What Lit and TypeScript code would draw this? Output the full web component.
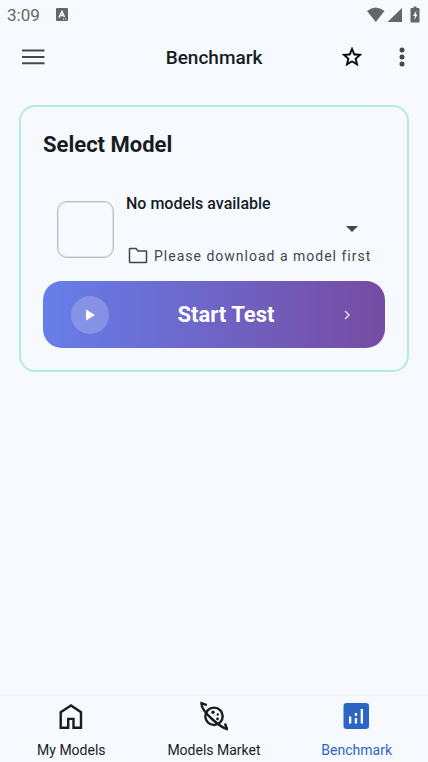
import { LitElement, html, css, svg } from "lit";
import { customElement, state } from "lit/decorators.js";
import { classMap } from "lit/directives/class-map.js";

const homeIcon = svg`<path d="M3.700 11.200 L14 4.500 L24 11.200 V26.800 H16.500 V17.900 H11.200 V26.800 H3.700 Z" />`;

const planetIcon = svg`
  <circle cx="14" cy="15.300" r="8.700" />
  <path d="M6.800 4.200 L1.500 2.200 C1.200 6 6 12.500 12 18 C17.500 23 22.500 27 27 28 L25 22.500" />
  <g class="dots"><circle cx="13" cy="11.300" r="1.700" /><circle cx="17.800" cy="13.500" r="1.200" /><circle cx="17.500" cy="18" r="1.400" /></g>`;

const chartIcon = svg`
  <rect class="tile" x="0.500" y="2" width="25.500" height="26" rx="3" />
  <path class="bars" d="M6 15.500h2.300v7H6z M11.800 12h2.300v3h-2.300z M11.800 17h2.300v5.500h-2.300z M17.700 8h2.300v14.500h-2.300z" />`;

const tabs = [
  { id: "models", label: "My Models", icon: homeIcon },
  { id: "market", label: "Models Market", icon: planetIcon },
  { id: "benchmark", label: "Benchmark", icon: chartIcon },
];

@customElement("app-root")
export class AppRoot extends LitElement {
  @state() private active = "benchmark";

  static styles = css`
    :host {
      display: flex;
      flex-direction: column;
      min-height: 100vh;
      background: #f6faff;
      color: #171c1f;
      font-family: Roboto, "Noto Sans", sans-serif;
    }
    button {
      font: inherit;
      color: inherit;
      border: 0;
      padding: 0;
      background: none;
      cursor: pointer;
    }
    svg {
      display: block;
      flex: none;
    }
    .status {
      display: flex;
      align-items: center;
      height: 29px;
      padding: 0 7px;
      color: #666;
      font-size: 17px;
    }
    .status .note {
      margin-left: 16px;
    }
    .status .radios {
      margin-left: auto;
    }
    .bar {
      display: grid;
      grid-template-columns: 1fr auto 1fr;
      align-items: center;
      height: 56px;
      padding: 0 8px;
    }
    .bar h1 {
      margin: 0;
      font-size: 19px;
      line-height: 25px;
      font-weight: 500;
    }
    .actions {
      display: flex;
      justify-content: flex-end;
    }
    .icon-button {
      display: grid;
      place-items: center;
      width: 50px;
      height: 48px;
    }
    .actions .more {
      width: 36px;
      margin-left: 7px;
    }
    main {
      flex: 1;
      padding: 20px 19px;
    }
    .card {
      padding: 22px;
      border: 2px solid #b4ecdc;
      border-radius: 16px;
    }
    .card h2 {
      margin: 0;
      font-size: 22px;
      line-height: 32px;
      font-weight: 700;
    }
    .picker {
      display: grid;
      grid-template-columns: 57px 1fr 24px;
      column-gap: 12px;
      align-items: center;
      height: 78px;
      margin-top: 29px;
      margin-bottom: 13px;
      padding: 0 21px 0 14px;
    }
    .thumb {
      height: 55px;
      border: 1px solid #b9bdc4;
      box-shadow: inset 0 0 0 1px #e0e3e8;
      border-radius: 10px;
    }
    .details {
      display: flex;
      flex-direction: column;
      justify-content: space-between;
      align-self: stretch;
      white-space: nowrap;
      width: 0;
    }
    .details select {
      appearance: none;
      border: 0;
      padding: 0;
      margin: 0;
      background: none;
      color: inherit;
      font: 500 16px/28px Roboto, "Noto Sans", sans-serif;
      align-self: flex-start;
    }
    .hint {
      display: flex;
      align-items: center;
      gap: 6px;
      padding-left: 2px;
      color: #40484c;
      font-size: 14px;
      line-height: 24px;
      letter-spacing: 1px;
    }
    .start {
      display: flex;
      align-items: center;
      width: 100%;
      height: 67px;
      padding: 0 28px;
      border-radius: 19px;
      background: linear-gradient(90deg, #667eea, #764ba2);
      color: #fff;
    }
    .start .play {
      display: grid;
      place-items: center;
      width: 38px;
      height: 38px;
      border-radius: 50%;
      background: rgb(255 255 255 / 20%);
    }
    .start .caption {
      flex: 1;
      padding-left: 6px;
      font-size: 22px;
      line-height: 28px;
      font-weight: 700;
    }
    nav {
      display: grid;
      grid-template-columns: repeat(3, 1fr);
      height: 66px;
      border-top: 1px solid #f0f4f9;
    }
    .tab {
      display: flex;
      flex-direction: column;
      align-items: center;
      gap: 9px;
      padding-top: 5px;
      font-size: 14px;
      line-height: 20px;
    }
    .tab svg {
      fill: none;
      stroke: #171c1f;
      stroke-width: 2.4;
    }
    .tab .dots {
      fill: #171c1f;
      stroke: none;
    }
    .tab .tile {
      fill: #2b66c5;
      stroke: none;
    }
    .tab .bars {
      fill: #fff;
      stroke: none;
    }
    .tab.active {
      color: #2b66c5;
    }
  `;

  render() {
    return html`
      <div class="status">
        <span>3:09</span>
        <svg class="note" width="12" height="13" viewBox="0 0 12 13">
          <rect width="12" height="13" rx="1" fill="#666" />
          <path d="M3 9.500 L6 3.500 L8.500 9 M4.500 7.500 H7.500" fill="none" stroke="#fff" stroke-width="1.500" />
          <path d="M7 11h1M9 11h1" stroke="#fff" />
        </svg>
        <svg class="radios" width="54" height="18" viewBox="0 0 54 18" fill="#666">
          <path d="M0 5 Q8.800 -2 17.500 5 L8.800 16 Z" />
          <path d="M35 2 V16 H20.500 Z" />
          <path d="M46.500 0.500h3v1.500h2q1 0 1 1v12.500q0 1-1 1h-7q-1 0-1-1V3q0-1 1-1h2z" />
          <path d="M49.500 4.500 L46 10 H48 L47.300 14 L50.500 8.500 H48.700 Z" fill="#fff" />
        </svg>
      </div>

      <header class="bar">
        <button class="icon-button" aria-label="Menu">
          <svg width="24" height="18" viewBox="0 0 24 18" stroke="#49454f" stroke-width="2">
            <path d="M1 2.500H23.500M1 9H23.500M1 15.200H23.500" />
          </svg>
        </button>
        <h1>Benchmark</h1>
        <div class="actions">
          <button class="icon-button" aria-label="Favourite">
            <svg width="24" height="24" viewBox="0 0 24 24">
              <path fill="#000" stroke="#000" stroke-width="0.300" d="M22 9.240l-7.190-.62L12 2 9.190 8.630 2 9.240l5.460 4.730L5.820 21 12 17.270 18.180 21l-1.630-7.030L22 9.240zM12 15.400l-3.760 2.270 1-4.280-3.320-2.880 4.380-.38L12 6.100l1.710 4.040 4.380.38-3.320 2.880 1 4.280L12 15.400z" />
            </svg>
          </button>
          <button class="icon-button more" aria-label="More options">
            <svg width="6" height="20" viewBox="0 0 6 20" fill="#49454f">
              <circle cx="3" cy="3" r="2.500" /><circle cx="3" cy="10" r="2.500" /><circle cx="3" cy="17" r="2.500" />
            </svg>
          </button>
        </div>
      </header>

      <main>
        <section class="card">
          <h2 id="select-model">Select Model</h2>
          <div class="picker">
            <div class="thumb"></div>
            <div class="details">
              <select aria-labelledby="select-model">
                <option>No models available</option>
              </select>
              <div class="hint">
                <svg width="20" height="18" viewBox="0 0 20 18" fill="none" stroke="#40484c" stroke-width="1.500">
                  <path d="M1.500 2q0-.5.500-.5h6l2 2.500h8q.5 0 .5.500v10.500q0 .5-.5.500h-16q-.5 0-.5-.5z" />
                </svg>
                <span>Please download a model first</span>
              </div>
            </div>
            <svg width="24" height="24" viewBox="0 0 24 24"><path d="M6 9h12l-6 6z" fill="#40484c" /></svg>
          </div>
          <button class="start">
            <span class="play">
              <svg width="10" height="12" viewBox="0 0 10 12"><path d="M1 0.500 L10 6 L1 11.500Z" fill="#fff" /></svg>
            </span>
            <span class="caption">Start Test</span>
            <svg width="20" height="20" viewBox="0 0 20 20" fill="none" stroke="#e3d9ee" stroke-width="1.500">
              <path d="M8 6l4 4-4 4" />
            </svg>
          </button>
        </section>
      </main>

      <nav aria-label="Main">
        ${tabs.map(
          (tab) => html`
            <button
              class=${classMap({ tab: true, active: tab.id === this.active })}
              @click=${() => (this.active = tab.id)}
            >
              <svg width="28" height="30" viewBox="0 0 28 30">${tab.icon}</svg>
              <span>${tab.label}</span>
            </button>
          `,
        )}
      </nav>
    `;
  }
}
